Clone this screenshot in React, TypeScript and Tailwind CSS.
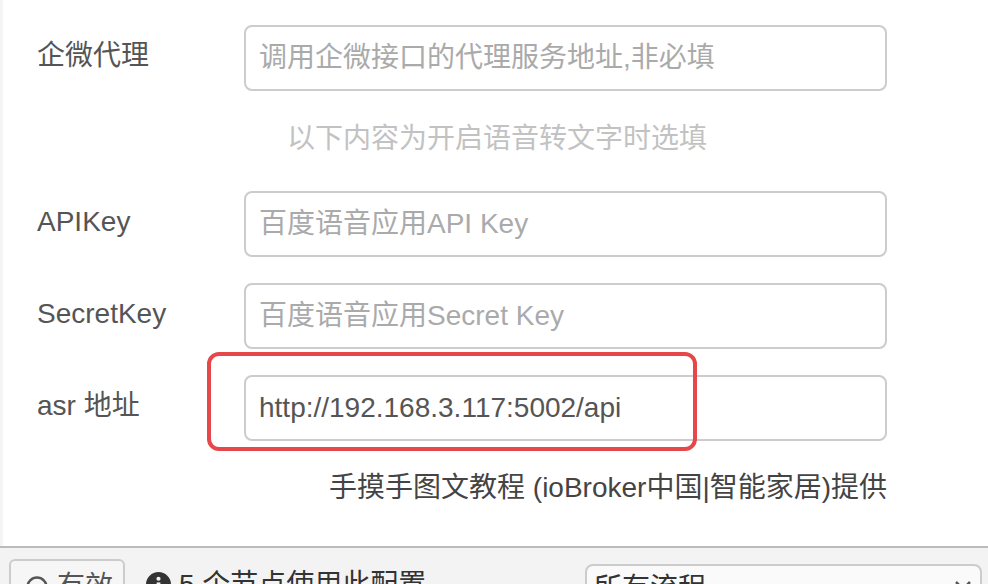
import React from "react";

const font = { fontFamily: '"Liberation Sans", "Noto Sans CJK SC", sans-serif' };

function Row({ label, placeholder, value }: { label: string; placeholder?: string; value?: string }) {
  return (
    <div className="flex items-center">
      <div className="w-[244px] shrink-0 pl-[37px] text-[28px] leading-[34px] text-[#555] -mt-[4px]">{label}</div>
      <div className="w-[643px] h-[66px] shrink-0 border-2 border-[#ccc] rounded-[8px] bg-white flex items-center pl-[13px] text-[28px] leading-[34px]">
        {value ? <span className="text-[#555]">{value}</span> : <span className="text-[#aaa]">{placeholder}</span>}
      </div>
    </div>
  );
}

export default function App() {
  return (
    <div className="w-[988px] h-[584px] overflow-hidden bg-white flex flex-col relative" style={font}>
      <div className="flex-1 flex">
        <div className="w-[3px] bg-[#f4f4f4]" />
        <div className="flex-1 flex flex-col pt-[25px] relative -ml-[3px]">
          <Row label="企微代理" placeholder="调用企微接口的代理服务地址,非必填" />
          <div className="h-[100px] pt-[31px] pl-[287px] text-[28px] leading-[34px] text-[#c2c2c2]">以下内容为开启语音转文字时选填</div>
          <div className="flex flex-col gap-[26px]">
            <Row label="APIKey" placeholder="百度语音应用API Key" />
            <Row label="SecretKey" placeholder="百度语音应用Secret Key" />
            <Row label="asr 地址" value="http://192.168.3.117:5002/api" />
          </div>
          <div className="mt-[30px] w-[887px] text-right text-[28px] leading-[34px] text-[#444]">手摸手图文教程 (ioBroker中国|智能家居)提供</div>
          <div className="absolute left-[207px] top-[352px] w-[490px] h-[99px] border-[4px] border-[#e6474a] rounded-[12px] pointer-events-none" />
        </div>
      </div>
      <div className="h-[38px] shrink-0 border-t-2 border-[#bbb] bg-[#f3f3f3] flex items-start relative">
        <div className="ml-[9px] mt-[11px] w-[116px] h-[50px] border-2 border-[#ccc] rounded-[6px] bg-[#f6f6f6] flex items-start pt-[9px] pl-[15px] gap-[9px] text-[28px] leading-[34px] text-[#555]">
          <svg width="22" height="22" viewBox="0 0 22 22" className="mt-[6px]">
            <circle cx="11" cy="11" r="9.5" fill="none" stroke="#555" strokeWidth="2.5" />
          </svg>
          <span>有效</span>
        </div>
        <div className="ml-[21px] mt-[20px] flex items-start gap-[8px] text-[28px] leading-[34px] text-[#333]">
          <svg width="25" height="25" viewBox="0 0 24 24" className="mt-[4px]">
            <circle cx="12" cy="12" r="12" fill="#333" />
            <circle cx="12" cy="6.5" r="2" fill="#f3f3f3" />
            <rect x="10.2" y="10" width="3.6" height="9" fill="#f3f3f3" />
          </svg>
          <span>5 个节点使用此配置</span>
        </div>
        <div className="absolute left-[585px] top-[16px] w-[397px] h-[50px] border-2 border-[#ccc] rounded-[8px] bg-[#fafafa] pl-[7px] pt-[6px] text-[28px] leading-[34px] text-[#333]">
          所有流程
          <svg width="18" height="12" viewBox="0 0 18 12" className="absolute right-[8px] top-[14px]">
            <path d="M2 2 L9 9 L16 2" fill="none" stroke="#555" strokeWidth="2.5" />
          </svg>
        </div>
      </div>
    </div>
  );
}
